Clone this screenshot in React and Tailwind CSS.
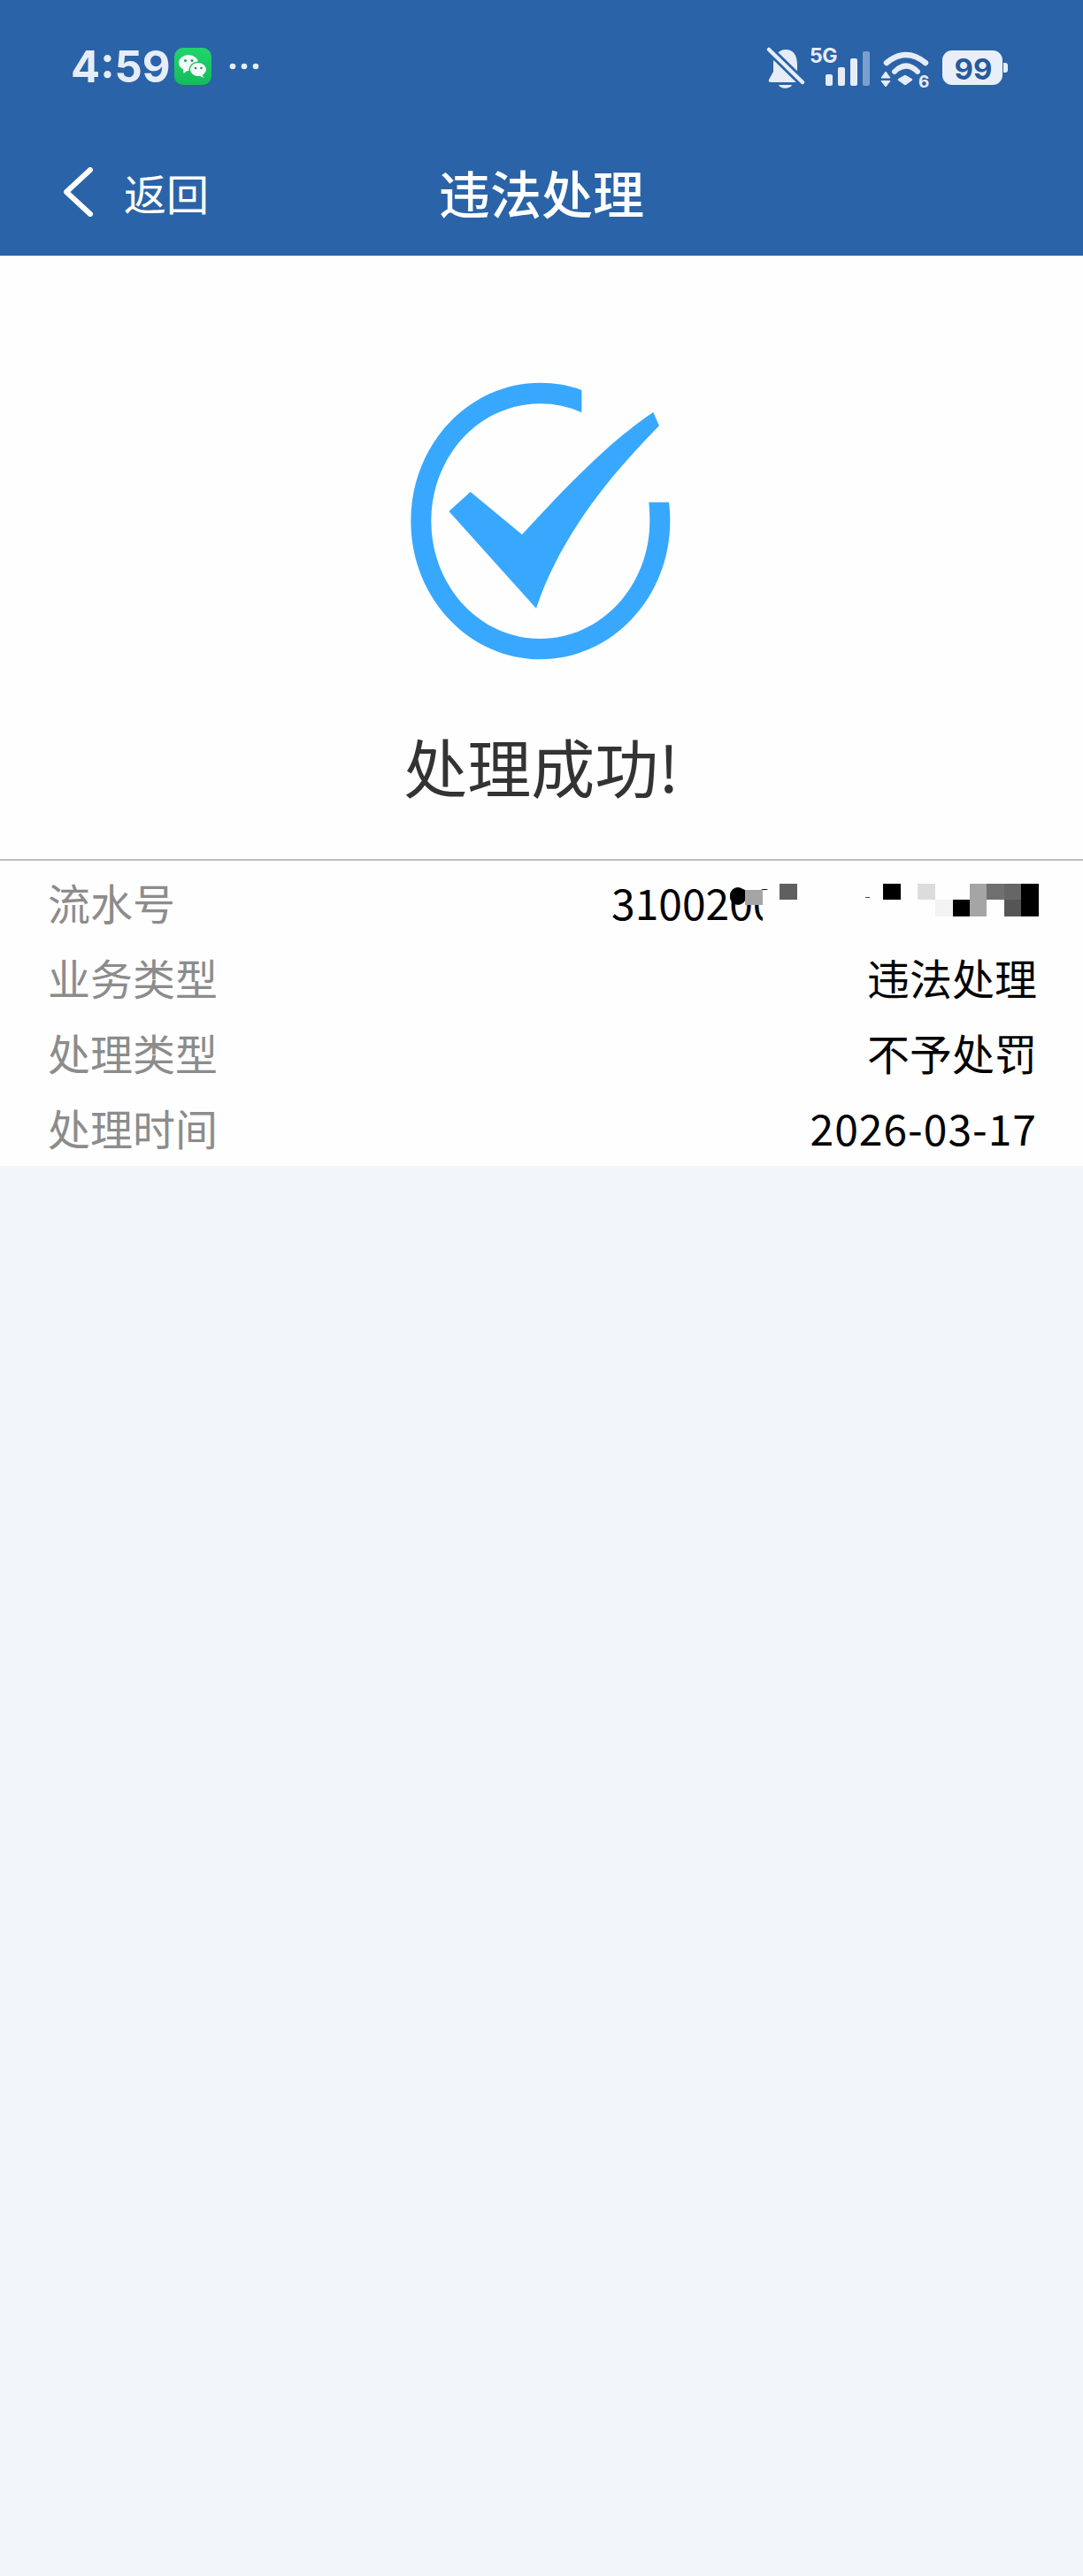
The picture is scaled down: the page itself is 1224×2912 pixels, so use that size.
export default function App() {
  return (
    <div className="w-[1224px] min-h-[2912px] bg-[#f3f6f8] font-['Noto_Sans_CJK_SC','Noto_Sans',sans-serif]">
      <header className="h-[289px] bg-[#2a63a8] flex flex-col">
        <div className="h-[150px] relative flex items-center pl-[80px]">
          <span className="font-['Inter',sans-serif] font-bold text-[49px] leading-none text-[#e6edf8] w-[117px]">4:59</span>
          <svg width="42" height="42" viewBox="0 0 42 42" className="shrink-0">
            <defs>
              <linearGradient id="wx" x1="0" y1="0" x2="0" y2="1">
                <stop offset="0" stopColor="#20d56c" />
                <stop offset="1" stopColor="#16bb5b" />
              </linearGradient>
            </defs>
            <rect width="42" height="42" rx="10" fill="url(#wx)" />
            <ellipse cx="16" cy="17" rx="11" ry="9" fill="#f4fbf6" />
            <path d="M10 23 L10.5 29 L16 25 Z" fill="#f4fbf6" />
            <ellipse cx="27" cy="24.5" rx="10.5" ry="9" fill="#16c163" />
            <ellipse cx="27" cy="24.5" rx="9" ry="7.6" fill="#f4fbf6" />
            <path d="M31 30 L33.5 34 L27 31 Z" fill="#f4fbf6" />
            <circle cx="12.5" cy="14.5" r="1.5" fill="#1a9a58" />
            <circle cx="20" cy="14.5" r="1.5" fill="#1a9a58" />
            <circle cx="24" cy="23" r="1.3" fill="#1a9a58" />
            <circle cx="30.5" cy="23" r="1.3" fill="#1a9a58" />
          </svg>
          <svg width="36" height="8" viewBox="0 0 36 8" className="ml-[20px] shrink-0">
            <circle cx="4" cy="4" r="3.3" fill="#e6edf8" />
            <circle cx="17" cy="4" r="3.3" fill="#e6edf8" />
            <circle cx="30" cy="4" r="3.3" fill="#e6edf8" />
          </svg>
          <svg width="280" height="65" viewBox="860 40 280 65" className="ml-auto mr-[84px] shrink-0">
            <path d="M888 53 C897 53 901 60 901 70 L901 78 L907 87 Q908 90 905 90 L871 90 Q868 90 869 87 L874 78 L874 68 C874 60 880 53 888 53 Z" fill="#e6edf8" />
            <path d="M880 93 L895 93 C893 98 882 98 880 93 Z" fill="#e6edf8" />
            <path d="M866 50 L909 92" stroke="#2a63a8" strokeWidth="10" />
            <path d="M869 53 L907 90" stroke="#e6edf8" strokeWidth="4.5" strokeLinecap="round" />
            <text x="915" y="68" fontFamily="Inter, sans-serif" fontWeight="700" fontSize="23" fill="#e6edf8" letterSpacing="-0.5">5G</text>
            <rect x="933" y="81" width="8" height="13" rx="2" fill="#e6edf8" />
            <rect x="947" y="73" width="8" height="21" rx="2" fill="#e6edf8" />
            <rect x="961" y="63" width="8" height="31" rx="2" fill="#e6edf8" />
            <rect x="975" y="55" width="8" height="39" rx="2" fill="#7c9fd0" />
            <path d="M1002 68 Q1024 50 1046 68" stroke="#e6edf8" strokeWidth="6.5" strokeLinecap="round" fill="none" />
            <path d="M1011 78 Q1024 65 1037 78" stroke="#e6edf8" strokeWidth="6" strokeLinecap="round" fill="none" />
            <path d="M1016 87 L1023 83 L1030 87 L1023 92 Z" fill="#e6edf8" stroke="#e6edf8" strokeWidth="2.5" strokeLinejoin="round" />
            <path d="M996 85 L1001 78 L1006 85 Z" fill="#e6edf8" stroke="#e6edf8" strokeWidth="1" strokeLinejoin="round" />
            <path d="M996 88.5 L1006 88.5 L1001 95 Z" fill="#e6edf8" stroke="#e6edf8" strokeWidth="1" strokeLinejoin="round" />
            <text x="1038" y="96" fontFamily="Inter, sans-serif" fontWeight="700" fontSize="19" fill="#e6edf8">6</text>
            <rect x="1065" y="54" width="68" height="39" rx="11" fill="#e9eff8" />
            <path d="M1134 68 L1136 68 Q1139 68 1139 71 L1139 76 Q1139 79 1136 79 L1134 79 Z" fill="#e9eff8" />
            <text x="1100" y="87" textAnchor="middle" fontFamily="Inter, sans-serif" fontWeight="700" fontSize="33" fill="#275a9c">99</text>
          </svg>
        </div>
        <div className="h-[134px] grid grid-cols-[1fr_auto_1fr] items-center">
          <div className="flex items-center pl-[72px]">
            <svg width="34" height="56" viewBox="72 189 34 56" className="shrink-0">
              <path d="M102 192 L75 217 L102 242" stroke="#ffffff" strokeWidth="6" strokeLinecap="round" strokeLinejoin="round" fill="none" />
            </svg>
            <span className="ml-[34px] text-[48px] leading-none text-white">返回</span>
          </div>
          <h1 className="text-[58px] font-medium leading-none text-white">违法处理</h1>
          <div />
        </div>
      </header>

      <section className="bg-[#fefefe] pt-[138px] h-[682px] flex flex-col items-center">
        <svg width="303.33" height="323.33" viewBox="120 80 910 970" className="shrink-0">
          <path
            d="M712 122 C672 105 620 97 572 97 C329 97 133 307 133 566 C133 825 329 1035 572 1035 C815 1035 1012 825 1012 566 C1012 545 1011 522 1008 502 L940 502 C942 522 943 545 943 566 C943 786 778 965 572 965 C366 965 202 786 202 566 C202 346 366 168 572 168 C620 168 668 178 712 198 Z"
            fill="#38a8ff"
          />
          <path
            d="M262 533 L335 467 L510 612 C640 470 800 300 955 197 L975 243 C800 420 640 620 558 862 Z"
            fill="#38a8ff"
          />
        </svg>
        <h2 className="mt-[65px] text-[72px] leading-[100px] text-[#333333]">处理成功!</h2>
      </section>

      <div className="h-[2px] bg-[#bcbcbc]" />

      <section className="bg-[#fefefe] pt-[3px] pb-[2px] pl-[54px] pr-[52px] text-[48px]">
        <div className="h-[85px] flex items-center justify-between">
          <span className="text-[#8c8c8c]">流水号</span>
          <div className="relative h-[85px] w-[481px] flex items-center text-black">
            <span>3100200</span>
            <div className="absolute left-[134px] top-[27px] w-[18px] h-[20px] rounded-full bg-black" />
            <div className="absolute left-[151px] top-[30px] w-[20px] h-[17px] bg-[#a5a5a5]" />
            <div className="absolute left-[171px] top-[30px] w-[20px] h-[36px] bg-[#fefefe]" />
            <div className="absolute left-[190px] top-[23px] w-[20px] h-[18px] bg-[#5f5f5f]" />
            <div className="absolute left-[287px] top-[38px] w-[5px] h-[1px] bg-[#444444]" />
            <div className="absolute left-[307px] top-[23px] w-[20px] h-[18px] bg-black" />
            <div className="absolute left-[346px] top-[23px] w-[20px] h-[18px] bg-[#dcdcdc]" />
            <div className="absolute left-[366px] top-[41px] w-[20px] h-[19px] bg-[#f3f3f3]" />
            <div className="absolute left-[386px] top-[41px] w-[19px] h-[19px] bg-black" />
            <div className="absolute left-[405px] top-[23px] w-[19px] h-[37px] bg-[#a5a5a5]" />
            <div className="absolute left-[424px] top-[23px] w-[20px] h-[18px] bg-[#707070]" />
            <div className="absolute left-[444px] top-[23px] w-[19px] h-[18px] bg-[#666666]" />
            <div className="absolute left-[444px] top-[41px] w-[19px] h-[19px] bg-[#555555]" />
            <div className="absolute left-[463px] top-[23px] w-[20px] h-[37px] bg-black" />
          </div>
        </div>
        <div className="h-[85px] flex items-center justify-between">
          <span className="text-[#8c8c8c]">业务类型</span>
          <span className="text-black">违法处理</span>
        </div>
        <div className="h-[85px] flex items-center justify-between">
          <span className="text-[#8c8c8c]">处理类型</span>
          <span className="text-black">不予处罚</span>
        </div>
        <div className="h-[85px] flex items-center justify-between">
          <span className="text-[#8c8c8c]">处理时间</span>
          <span className="text-black tracking-[1px]">2026-03-17</span>
        </div>
      </section>
    </div>
  );
}
